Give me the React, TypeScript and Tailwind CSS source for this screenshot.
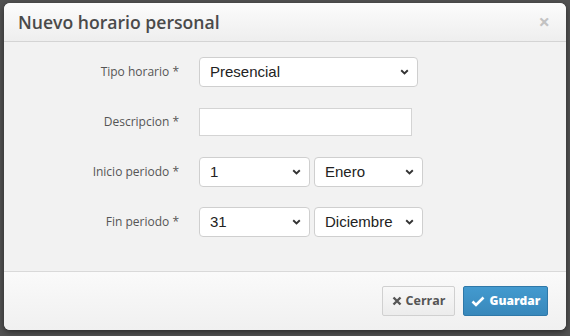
import type { ReactNode } from 'react'

const DAYS = Array.from({ length: 31 }, (_, i) => String(i + 1))
const MONTHS = [
  'Enero',
  'Febrero',
  'Marzo',
  'Abril',
  'Mayo',
  'Junio',
  'Julio',
  'Agosto',
  'Septiembre',
  'Octubre',
  'Noviembre',
  'Diciembre',
]

function Chevron() {
  return (
    <svg
      className="pointer-events-none absolute right-[9px] top-1/2 -translate-y-1/2"
      width="9"
      height="6"
      viewBox="0 0 9 6"
    >
      <path d="M1.2 1.2 4.5 4.4 7.8 1.2" fill="none" stroke="#333" strokeWidth="1.9" />
    </svg>
  )
}

function Select({
  value,
  options,
  className = '',
}: {
  value: string
  options: string[]
  className?: string
}) {
  return (
    <div className={`relative h-[30px] ${className}`}>
      <select
        defaultValue={value}
        className="h-full w-full appearance-none rounded-[4px] border border-[#cfcfcf] bg-white pl-[10px] pr-6 font-['Liberation_Sans',Arial,sans-serif] text-[15px] text-[#222] outline-none"
      >
        {options.map((o) => (
          <option key={o}>{o}</option>
        ))}
      </select>
      <Chevron />
    </div>
  )
}

function Row({ label, children }: { label: string; children: ReactNode }) {
  return (
    <div className="flex h-[30px] items-center">
      <label className="w-[175px] text-right text-[12px] text-[#555]">{label}</label>
      <div className="ml-[20px] flex items-center gap-[4px]">{children}</div>
    </div>
  )
}

export default function App() {
  return (
    <div className="h-[336px] w-[570px] bg-[#525252] pb-[6px] pl-[4px] pr-[4px] pt-[3px] font-['Open_Sans',sans-serif]">
      <div className="flex h-full flex-col overflow-hidden rounded-[6px] bg-[#f2f2f2] shadow-[0_2px_6px_rgba(0,0,0,0.5)]">
        {/* Header */}
        <div className="flex h-[39px] items-center justify-between border-b border-[#d4d4d4] bg-gradient-to-b from-[#fcfcfc] to-[#eeeeee] pl-[14px] pr-[16px]">
          <h3 className="text-[17.6px] font-semibold text-[#4a4a4a]">Nuevo horario personal</h3>
          <span className="text-[20px] font-bold leading-none text-[#c2c2c2]">×</span>
        </div>

        {/* Body */}
        <div className="flex flex-1 flex-col gap-[20px] pt-[15px]">
          <Row label="Tipo horario *">
            <Select value="Presencial" options={['Presencial', 'Teletrabajo']} className="w-[219px]" />
          </Row>
          <Row label="Descripcion *">
            <input
              type="text"
              className="h-[28px] w-[213px] border border-[#d4d4d4] bg-white px-2 text-[14px] outline-none"
            />
          </Row>
          <Row label="Inicio periodo *">
            <Select value="1" options={DAYS} className="w-[111px]" />
            <Select value="Enero" options={MONTHS} className="w-[109px]" />
          </Row>
          <Row label="Fin periodo *">
            <Select value="31" options={DAYS} className="w-[111px]" />
            <Select value="Diciembre" options={MONTHS} className="w-[109px]" />
          </Row>
        </div>

        {/* Footer */}
        <div className="flex h-[59px] items-center justify-end gap-[8px] border-t border-[#d9d9d9] bg-gradient-to-b from-[#fafafa] to-[#f0f0f0] pr-[18px]">
          <button className="flex h-[30px] w-[73px] items-center justify-center gap-[4px] rounded-[2px] border border-[#d0d0d0] bg-gradient-to-b from-[#f8f8f8] to-[#ececec] text-[12.5px] font-bold text-[#555]">
            <svg width="10" height="10" viewBox="0 0 10 10">
              <path d="M1.5 1.5 8.5 8.5M8.5 1.5 1.5 8.5" stroke="#555" strokeWidth="2.4" />
            </svg>
            Cerrar
          </button>
          <button className="flex h-[30px] w-[85px] items-center justify-center gap-[5px] rounded-[2px] border border-[#2f78a8] bg-gradient-to-b from-[#439acf] to-[#3888bb] text-[12px] font-extrabold text-white">
            <svg width="14" height="11" viewBox="0 0 14 11">
              <path d="M1.5 5.5 5 9 12.5 1.5" fill="none" stroke="#fff" strokeWidth="2.6" />
            </svg>
            Guardar
          </button>
        </div>
      </div>
    </div>
  )
}
